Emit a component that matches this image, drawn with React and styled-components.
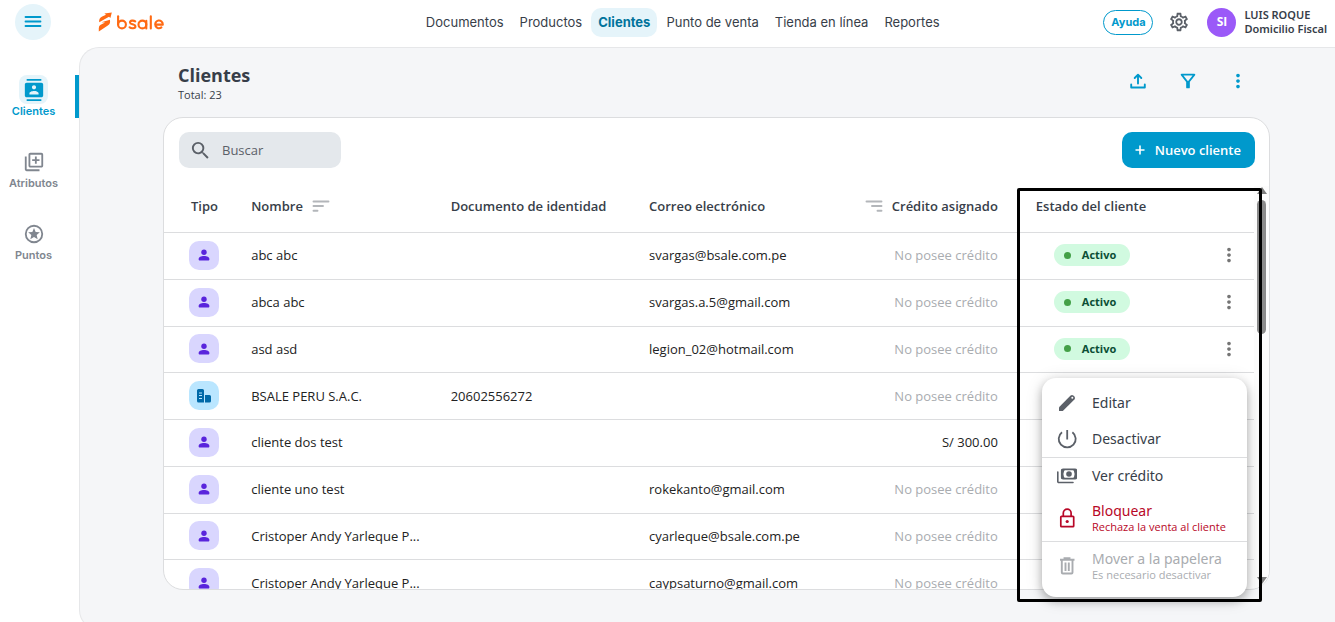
import React from "react";
import styled, { createGlobalStyle } from "styled-components";
import {
  MdContacts,
  MdOutlineLibraryAdd,
  MdOutlineFilterAlt,
  MdOutlineSettings,
  MdMoreVert,
  MdSearch,
} from "react-icons/md";

const color = {
  brand: "#0099cc",
  brandDark: "#00739c",
  brandSoft: "#e5f4fa",
  orange: "#ff6a13",
  ink: "#373e49",
  text: "#222222",
  gray: "#80868f",
  icon: "#5b6068",
  muted: "#a9acb0",
  line: "#dcdddf",
  page: "#f5f6f8",
  danger: "#b80727",
};

const ui = `"Open Sans", "Noto Sans", sans-serif`;
const noto = `"Noto Sans", "Open Sans", sans-serif`;
const inter = `Inter, "Liberation Sans", sans-serif`;

const GlobalStyle = createGlobalStyle`
  *, *::before, *::after { box-sizing: border-box; }
  body { margin: 0; background: #fff; color: ${color.text}; font: 13px/18px ${ui}; }
  button, input { font: inherit; color: inherit; }
  button { border: 0; padding: 0; background: none; cursor: pointer; }
  a { color: inherit; text-decoration: none; }
  svg { display: block; flex: none; }
`;

const Shell = styled.div`
  height: 100vh;
  overflow: hidden;
  display: grid;
  grid-template: 47px minmax(0, 1fr) / 79px minmax(0, 1fr);
`;

/* ---------- header ---------- */

const MenuCell = styled.div`
  padding: 4px 0 0 15px;
`;

const MenuButton = styled.button`
  display: grid;
  place-items: center;
  width: 36px;
  height: 36px;
  border-radius: 50%;
  background: ${color.brandSoft};
  color: ${color.brand};
`;

const Header = styled.header`
  display: grid;
  grid-template-columns: 11fr auto 13fr;
  align-items: center;
  padding: 0 8px 3px 18px;
`;

const Brand = styled.a`
  display: flex;
  align-items: center;
  color: ${color.orange};
`;

const Nav = styled.nav`
  display: flex;
  gap: 2px;
`;

const NavLink = styled.a`
  padding: 5px 7px;
  border-radius: 10px;
  font: ${(p) => (p.$active ? 700 : 400)} 13px/19px ${inter};
  color: ${(p) => (p.$active ? color.brandDark : color.ink)};
  background: ${(p) => (p.$active ? color.brandSoft : "transparent")};
`;

const Account = styled.div`
  display: flex;
  align-items: center;
  justify-content: flex-end;
`;

const HelpButton = styled.button`
  width: 50px;
  height: 25px;
  border: 1px solid ${color.brand};
  border-radius: 13px;
  color: ${color.brand};
  font: 700 11px/20px ${inter};
`;

const SettingsButton = styled.button`
  margin: 0 17px 0 15px;
  color: ${color.icon};
`;

const Avatar = styled.span`
  display: grid;
  place-items: center;
  width: 29px;
  height: 29px;
  border-radius: 50%;
  background: #9b59f8;
  color: #fff;
  font: 700 12px/14px ${ui};
`;

const UserName = styled.div`
  margin-left: 8px;
  font: 600 11px/14px ${noto};
  color: ${color.ink};
  white-space: nowrap;
`;

/* ---------- sidebar ---------- */

const Sidebar = styled.nav`
  display: flex;
  flex-direction: column;
  gap: 29px;
  padding-top: 28px;
`;

const SideLink = styled.a`
  display: flex;
  flex-direction: column;
  align-items: center;
  height: 43px;
  padding-right: 8px;
  border-right: 4px solid ${(p) => (p.$active ? color.brand : "transparent")};
  border-radius: 3px 0 0 3px;
  color: ${(p) => (p.$active ? color.brand : color.gray)};
  font: 600 11px/14px ${inter};
`;

const SideIcon = styled.span`
  display: grid;
  place-items: center;
  width: 29px;
  height: 29px;
  border-radius: 8px;
  background: ${(p) => (p.$active ? color.brandSoft : "transparent")};
`;

/* ---------- main ---------- */

const Main = styled.main`
  display: flex;
  flex-direction: column;
  margin-bottom: -8px;
  padding: 15px 65px 39px 83px;
  border: 1px solid #e6e7e9;
  border-right: 0;
  border-radius: 20px 0 0 20px;
  background: ${color.page};
`;

const TitleRow = styled.div`
  display: flex;
  justify-content: space-between;
  padding: 0 21px 0 15px;
  margin-bottom: 14px;
`;

const Title = styled.h1`
  margin: 0;
  font: 700 18px/24px ${ui};
  color: ${color.ink};
`;

const Total = styled.p`
  margin: 0;
  font-size: 11px;
  line-height: 16px;
  color: ${color.ink};
`;

const Tools = styled.div`
  display: flex;
  align-items: center;
  gap: 28px;
  padding-bottom: 4px;
  color: ${color.brand};
`;

const ToolButton = styled.button`
  display: grid;
  place-items: center;
  width: 22px;
  height: 22px;
`;

const CardArea = styled.div`
  position: relative;
  flex: 1;
  min-height: 0;
`;

const Card = styled.section`
  display: flex;
  flex-direction: column;
  height: 100%;
  overflow: hidden;
  border: 1px solid ${color.line};
  border-radius: 20px;
  background: #fff;
`;

const Toolbar = styled.div`
  display: flex;
  justify-content: space-between;
  padding: 14px 14px 18px 15px;
`;

const Search = styled.label`
  display: flex;
  align-items: center;
  gap: 8px;
  width: 162px;
  height: 36px;
  padding: 0 10px;
  border-radius: 10px;
  background: #e4e8ec;
  color: ${color.icon};

  input {
    flex: 1;
    min-width: 0;
    border: 0;
    outline: 0;
    background: none;
  }
  input::placeholder { color: ${color.icon}; opacity: 1; }
`;

const PrimaryButton = styled.button`
  display: flex;
  align-items: center;
  gap: 10px;
  height: 36px;
  padding: 0 14px 1px 13px;
  border-radius: 10px;
  background: ${color.brand};
  color: #fff;
  font-weight: 600;
`;

const Scroller = styled.div`
  display: flex;
  align-items: stretch;
  flex: 1;
  min-height: 0;
`;

const TableClip = styled.div`
  flex: 1;
  min-width: 0;
  overflow: hidden;
`;

const Table = styled.table`
  width: 100%;
  height: 421px;
  table-layout: fixed;
  border-collapse: separate;
  border-spacing: 0;
`;

const Th = styled.th`
  height: 47px;
  padding: 0 0 6px ${(p) => p.$pad || 0}px;
  border-bottom: 1px solid ${color.line};
  text-align: ${(p) => p.$align || "left"};
  font-weight: 600;
  color: ${color.ink};
  white-space: nowrap;
`;

const Td = styled.td`
  height: 46px;
  padding: 0 ${(p) => p.$end || 0}px 1px ${(p) => p.$pad || 0}px;
  border-bottom: 1px solid ${color.line};
  text-align: ${(p) => p.$align || "left"};
  color: ${(p) => (p.$muted ? color.muted : color.text)};
  overflow: hidden;
  text-overflow: ellipsis;
  white-space: nowrap;
`;

const SortLabel = styled.span`
  display: inline-flex;
  vertical-align: top;
  align-items: center;
  gap: 9px;

  svg { color: #b3b6ba; }
`;

const TypeBadge = styled.span`
  display: grid;
  place-items: center;
  width: 30px;
  height: 29px;
  border-radius: 10px;
  background: ${(p) => (p.$company ? "#bae6ff" : "#d9d6fe")};
  color: ${(p) => (p.$company ? "#0069a8" : "#5925dc")};
`;

const Status = styled.span`
  display: inline-flex;
  align-items: center;
  gap: 11px;
  height: 22px;
  padding: 0 14px 0 10px;
  border-radius: 11px;
  background: #d1fae0;
  color: #0b4f35;
  font: 700 11px/16px ${ui};

  &::before {
    content: "";
    width: 7px;
    height: 7px;
    border-radius: 50%;
    background: #43a047;
  }
`;

const RowButton = styled.button`
  display: inline-block;
  vertical-align: middle;
  color: #757575;
`;

const ScrollTrack = styled.div`
  display: flex;
  flex-direction: column;
  align-items: center;
  justify-content: space-between;
  width: 15px;
  padding: 1px 0 5px;
  background: #fcfcfc;
`;

const Thumb = styled.div`
  width: 9px;
  height: 134px;
  margin: 6px 0 auto;
  border-radius: 5px;
  background: #8b8b8b;
`;

const Arrow = styled.i`
  border: solid transparent;
  border-width: 0 5px;
  ${(p) => (p.$up ? "border-bottom" : "border-top")}: 7px solid #7f7f7f;
`;

const Highlight = styled.div`
  position: absolute;
  top: 71px;
  right: 8px;
  bottom: -12px;
  width: 245px;
  border: 3px solid #000;
  border-radius: 2px;
  pointer-events: none;
`;

const Menu = styled.div`
  position: absolute;
  right: 23px;
  bottom: -7px;
  width: 205px;
  padding: 7px 0 8px;
  border-radius: 14px;
  background: #fff;
  box-shadow: 0 4px 10px rgba(0, 0, 0, 0.28), 0 2px 18px rgba(0, 0, 0, 0.12);
`;

const MenuGroup = styled.div`
  & + & { border-top: 1px solid ${color.line}; }
`;

const MenuItem = styled.button`
  display: flex;
  align-items: center;
  gap: 15px;
  width: 100%;
  height: ${(p) => (p.$tall ? 47 : 36)}px;
  padding-left: 15px;
  text-align: left;
  font: 14px/18px ${noto};
  color: ${(p) => (p.$danger ? color.danger : color.ink)};

  svg { color: ${(p) => (p.$danger ? color.danger : color.icon)}; }
  &:disabled, &:disabled svg { color: ${color.muted}; }
  small { display: block; font: 11px/14px ${ui}; }
`;

/* ---------- drawings ---------- */

const BurgerIcon = () => (
  <svg width="18" height="14" viewBox="0 0 18 14" fill="none" stroke="currentColor" strokeWidth="1.8" strokeLinecap="round">
    <path d="M1.5 2h15M1.5 6.5h15M1.5 11h15" />
  </svg>
);

const Logo = () => (
  <svg width="68" height="22" viewBox="0 0 68 22" role="img" aria-label="bsale">
    <g fill="currentColor">
      <path d="M2.2 11.2 Q1.6 7.4 5.2 5.5L9 3.7 7.4 2.5 14.8 1.400 13.400 7 12 5.700Z" />
      <path d="M4.500 11.200 L12.900 8.700 Q13.800 12.800 10.800 14.600L1.800 20.600V17Q1.800 14.800 3.700 13.700L8 11.600Z" />
    </g>
    <g fill="none" stroke="currentColor" strokeWidth="2.1" strokeLinecap="round" strokeLinejoin="round">
      <path d="M21.1 5.2V13.5" />
      <circle cx="25" cy="13.5" r="3.9" />
      <path d="M38.2 10.3C36.7 9.2 33 9.3 33 11.4S38.4 13.2 38.4 15.4 34.2 17.8 32.6 16.3" />
      <circle cx="45.4" cy="13.5" r="3.9" />
      <path d="M49.3 9.8V17.4M53.8 5.2V17.4" />
      <path d="M58.2 13.6H65.8A3.8 3.9 0 1 0 64.4 16.4" />
    </g>
  </svg>
);

const StarCircleIcon = ({ size }) => (
  <svg width={size} height={size} viewBox="0 0 24 24">
    <circle cx="12" cy="12" r="9" fill="none" stroke="currentColor" strokeWidth="2" />
    <path fill="currentColor" d="M12 5.500l1.800 4.300 4.600.4-3.500 3 1.100 4.500-4-2.400-4 2.400 1.100-4.500-3.500-3 4.600-.4z" />
  </svg>
);

const UploadIcon = () => (
  <svg width="16" height="16" viewBox="0 0 16 16" fill="none" stroke="currentColor" strokeWidth="1.9" strokeLinecap="round" strokeLinejoin="round">
    <path d="M8 10.5V2M4.7 5 8 1.7 11.3 5M1.2 11.500v3h13.600v-3" />
  </svg>
);

const SortIcon = ({ flip }) => (
  <svg width="18" height="12" viewBox="0 0 18 12" fill="none" stroke="currentColor" strokeWidth="1.9" strokeLinecap="round">
    <path d={flip ? "M1.5 1.5h15M7 6h9.5M12.5 10.7h4" : "M1.5 1.5h15M1.5 6h9.5M1.5 10.7h4"} />
  </svg>
);

const PersonIcon = () => (
  <svg width="12" height="12" viewBox="0 0 12 12" fill="currentColor">
    <circle cx="6" cy="3.2" r="2.7" />
    <path d="M.6 10.2C.6 7.8 3 6.9 6 6.9s5.4.9 5.4 3.3c0 .9-.5 1.3-1.3 1.3H1.9C1.1 11.5.6 11.1.6 10.2z" />
  </svg>
);

const BuildingIcon = () => (
  <svg width="14" height="14" viewBox="0 0 14 14">
    <path fill="currentColor" d="M1.5 0h4A1.5 1.5 0 0 1 7 1.5V13.5H1.5A1.5 1.5 0 0 1 0 12V1.5A1.5 1.5 0 0 1 1.5 0zM8 6h4.5A1.5 1.5 0 0 1 14 7.5V12a1.5 1.5 0 0 1-1.5 1.5H8z" />
    <path stroke="#bae6ff" d="M2 4h3M2 6.5h3M2 9.5h3" />
  </svg>
);

const PlusIcon = () => (
  <svg width="10" height="10" viewBox="0 0 10 10" stroke="currentColor" strokeWidth="1.6">
    <path d="M5 .5v9M.5 5h9" />
  </svg>
);

const PencilIcon = () => (
  <svg width="20" height="20" viewBox="0 0 20 20">
    <path fill="currentColor" d="M2 18v-3.8L13.6 2.6a2 2 0 0 1 2.8 0l1 1a2 2 0 0 1 0 2.8L5.8 18z" />
    <circle cx="15.3" cy="4.7" r="1" fill="#fff" />
  </svg>
);

const PowerIcon = () => (
  <svg width="20" height="20" viewBox="0 0 20 20" fill="none" stroke="currentColor" strokeWidth="1.8">
    <path d="M10.2 1v9.5M5 3.2a8.5 8.5 0 1 0 10.4 0" />
  </svg>
);

const MoneyIcon = () => (
  <svg width="20" height="16" viewBox="0 0 20 16">
    <path fill="none" stroke="currentColor" strokeWidth="1.6" strokeLinecap="round" d="M.8 4v9.5a1 1 0 0 0 1 1H16" />
    <rect x="4.8" y="1.3" width="14.4" height="9.4" rx="1.2" fill="none" stroke="currentColor" strokeWidth="1.8" />
    <path fill="currentColor" d="M4.5 1h4a7 7 0 0 0 0 10h-4zM19.5 1h-4a7 7 0 0 1 0 10h4z" />
    <circle cx="12" cy="6" r="2.8" fill="currentColor" />
  </svg>
);

const LockIcon = () => (
  <svg width="20" height="20" viewBox="0 0 20 20" fill="none" stroke="currentColor" strokeWidth="1.7">
    <rect x="3.8" y="8.3" width="12.9" height="10.4" rx=".8" />
    <path d="M6.3 8V5a3.9 3.9 0 0 1 7.8 0v3" />
    <circle cx="10.2" cy="13.5" r="1.6" fill="currentColor" stroke="none" />
  </svg>
);

const TrashIcon = () => (
  <svg width="20" height="20" viewBox="0 0 20 20" fill="none" stroke="currentColor" strokeWidth="1.9">
    <path d="M3 3.7h14.5M7.5 3V2.3h5V3M4.8 4v12.5a1 1 0 0 0 1 1h8.7a1 1 0 0 0 1-1V4M8.5 6.5v8.500M11.800 6.500v8.500" />
  </svg>
);

/* ---------- data ---------- */

const navItems = ["Documentos", "Productos", "Clientes", "Punto de venta", "Tienda en línea", "Reportes"];

const sideItems = [
  { label: "Clientes", Icon: MdContacts, active: true },
  { label: "Atributos", Icon: MdOutlineLibraryAdd },
  { label: "Puntos", Icon: StarCircleIcon },
];

const clients = [
  { name: "abc abc", mail: "svargas@bsale.com.pe" },
  { name: "abca abc", mail: "svargas.a.5@gmail.com" },
  { name: "asd asd", mail: "legion_02@hotmail.com" },
  { name: "BSALE PERU S.A.C.", doc: "20602556272", company: true },
  { name: "cliente dos test", credit: "S/ 300.00" },
  { name: "cliente uno test", mail: "rokekanto@gmail.com" },
  { name: "Cristoper Andy Yarleque P...", mail: "cyarleque@bsale.com.pe" },
  { name: "Cristoper Andy Yarleque P...", mail: "caypsaturno@gmail.com" },
];

const openRow = 3;

function ClientRow({ client, covered }) {
  return (
    <tr>
      <Td $pad={25}>
        <TypeBadge $company={client.company}>{client.company ? <BuildingIcon /> : <PersonIcon />}</TypeBadge>
      </Td>
      <Td>{client.name}</Td>
      <Td>{client.doc}</Td>
      <Td>{client.mail}</Td>
      <Td $align="right" $muted={!client.credit}>{client.credit || "No posee crédito"}</Td>
      <Td $pad={56}>{!covered && <Status>Activo</Status>}</Td>
      <Td $align="right" $end={14}>
        {!covered && (
          <RowButton aria-label={`Acciones de ${client.name}`}>
            <MdMoreVert size={22} />
          </RowButton>
        )}
      </Td>
    </tr>
  );
}

export default function App() {
  return (
    <>
      <GlobalStyle />
      <Shell>
        <MenuCell>
          <MenuButton aria-label="Menú"><BurgerIcon /></MenuButton>
        </MenuCell>
        <Header>
          <Brand href="#"><Logo /></Brand>
          <Nav>
            {navItems.map((label) => (
              <NavLink key={label} href="#" $active={label === "Clientes"}>{label}</NavLink>
            ))}
          </Nav>
          <Account>
            <HelpButton>Ayuda</HelpButton>
            <SettingsButton aria-label="Configuración"><MdOutlineSettings size={22} /></SettingsButton>
            <Avatar>SI</Avatar>
            <UserName>LUIS ROQUE<br />Domicilio Fiscal</UserName>
          </Account>
        </Header>

        <Sidebar>
          {sideItems.map(({ label, Icon, active }) => (
            <SideLink key={label} href="#" $active={active}>
              <SideIcon $active={active}><Icon size={22} /></SideIcon>
              {label}
            </SideLink>
          ))}
        </Sidebar>

        <Main>
          <TitleRow>
            <div>
              <Title>Clientes</Title>
              <Total>Total: 23</Total>
            </div>
            <Tools>
              <ToolButton aria-label="Exportar"><UploadIcon /></ToolButton>
              <ToolButton aria-label="Filtrar"><MdOutlineFilterAlt size={22} /></ToolButton>
              <ToolButton aria-label="Más opciones"><MdMoreVert size={22} /></ToolButton>
            </Tools>
          </TitleRow>

          <CardArea>
            <Card>
              <Toolbar>
                <Search>
                  <MdSearch size={23} />
                  <input type="search" placeholder="Buscar" aria-label="Buscar" />
                </Search>
                <PrimaryButton><PlusIcon />Nuevo cliente</PrimaryButton>
              </Toolbar>
              <Scroller>
                <TableClip>
                  <Table>
                    <colgroup>
                      <col style={{ width: "8%" }} />
                      <col style={{ width: "18.3%" }} />
                      <col style={{ width: "18.2%" }} />
                      <col style={{ width: "17.5%" }} />
                      <col style={{ width: "14.5%" }} />
                      <col style={{ width: "15%" }} />
                      <col />
                    </colgroup>
                    <thead>
                      <tr>
                        <Th $pad={27}>Tipo</Th>
                        <Th><SortLabel>Nombre <SortIcon /></SortLabel></Th>
                        <Th>Documento de identidad</Th>
                        <Th>Correo electrónico</Th>
                        <Th $align="right"><SortLabel><SortIcon flip />Crédito asignado</SortLabel></Th>
                        <Th $pad={38} colSpan={2}>Estado del cliente</Th>
                      </tr>
                    </thead>
                    <tbody>
                      {clients.map((client, i) => (
                        <ClientRow key={i} client={client} covered={i >= openRow} />
                      ))}
                    </tbody>
                  </Table>
                </TableClip>
                <ScrollTrack>
                  <Arrow $up />
                  <Thumb />
                  <Arrow />
                </ScrollTrack>
              </Scroller>
            </Card>

            <Menu>
              <MenuGroup>
                <MenuItem><PencilIcon />Editar</MenuItem>
                <MenuItem><PowerIcon />Desactivar</MenuItem>
              </MenuGroup>
              <MenuGroup>
                <MenuItem><MoneyIcon />Ver crédito</MenuItem>
                <MenuItem $tall $danger><LockIcon /><span>Bloquear<small>Rechaza la venta al cliente</small></span></MenuItem>
              </MenuGroup>
              <MenuGroup>
                <MenuItem $tall disabled><TrashIcon /><span>Mover a la papelera<small>Es necesario desactivar</small></span></MenuItem>
              </MenuGroup>
            </Menu>
            <Highlight />
          </CardArea>
        </Main>
      </Shell>
    </>
  );
}
